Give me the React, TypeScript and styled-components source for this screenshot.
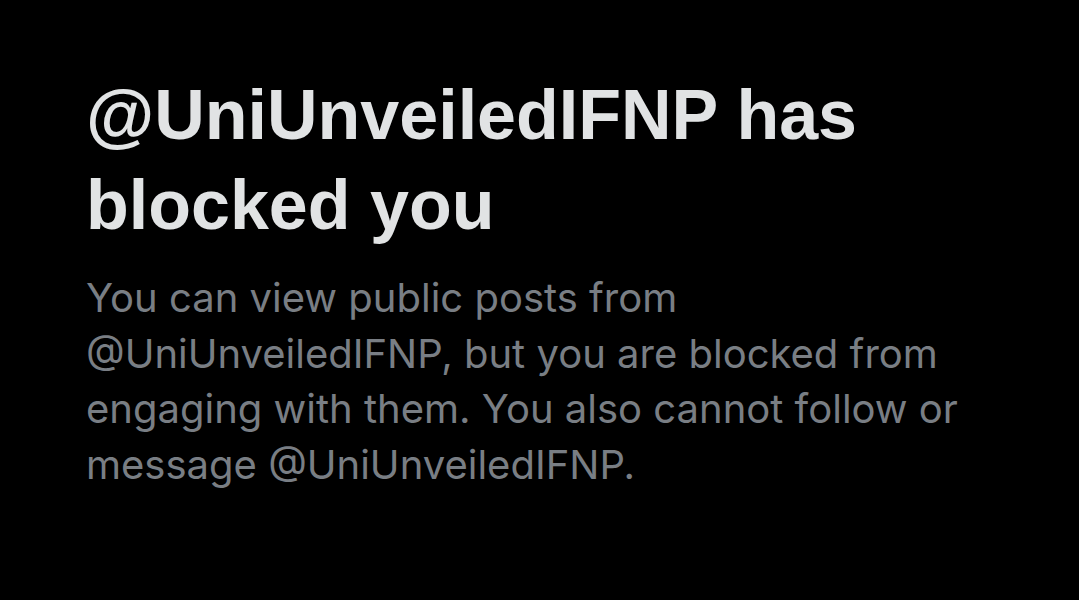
import styled, { createGlobalStyle } from 'styled-components';

const GlobalStyle = createGlobalStyle`
  html, body {
    margin: 0;
    padding: 0;
    background: #000000;
  }
`;

const Page = styled.div`
  width: 1079px;
  height: 600px;
  background: #000000;
  box-sizing: border-box;
  padding: 70px 86px 0 86px;
  display: flex;
  flex-direction: column;
  gap: 20px;
`;

const Title = styled.h1`
  margin: 0;
  color: #e1e3e4;
  font-family: 'Liberation Sans', Arial, sans-serif;
  font-weight: 700;
  font-size: 70px;
  line-height: 90px;
  max-width: 800px;
`;

const Message = styled.p`
  margin: 0;
  color: #797e84;
  font-family: Inter, 'Noto Sans', sans-serif;
  font-weight: 400;
  font-size: 40px;
  line-height: 55.5px;
  max-width: 900px;
`;

export default function App() {
  return (
    <>
      <GlobalStyle />
      <Page>
        <Title>@UniUnveiledIFNP has blocked you</Title>
        <Message>
          You can view public posts from @UniUnveiledIFNP, but you are blocked from engaging with
          them. You also cannot follow or message @UniUnveiledIFNP.
        </Message>
      </Page>
    </>
  );
}
